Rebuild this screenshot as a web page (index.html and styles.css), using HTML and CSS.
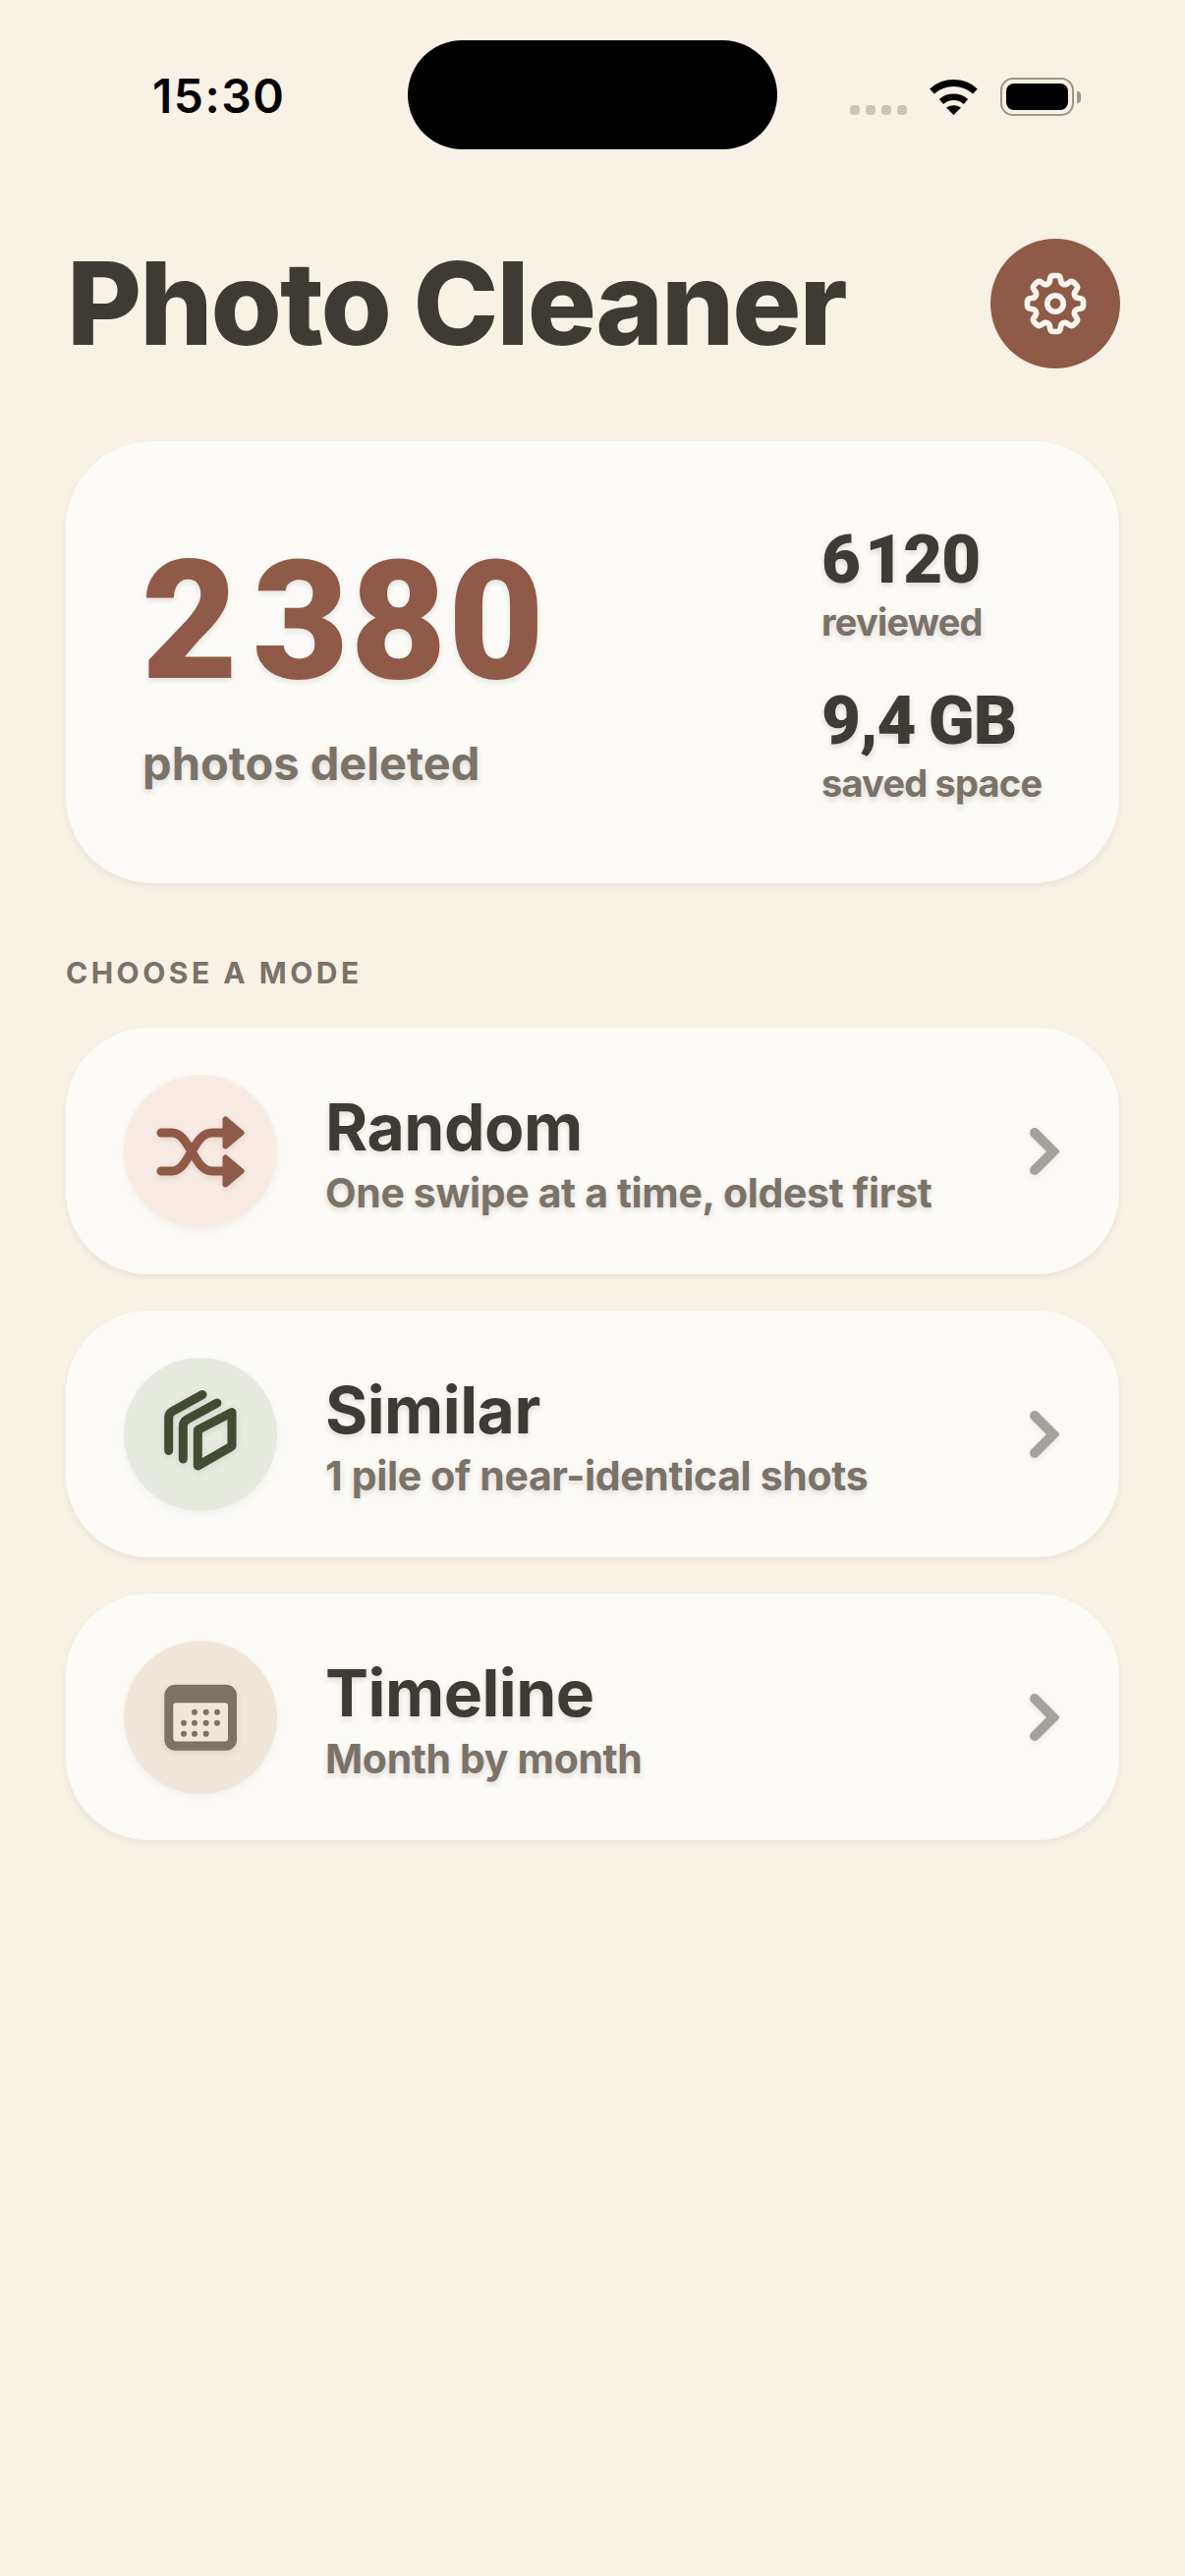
FILE: index.html
```html
<!DOCTYPE html>
<html lang="en">
<head>
  <meta charset="UTF-8">
  <meta name="viewport" content="width=device-width, initial-scale=1.0">
  <title>Photo Cleaner</title>
  <link rel="stylesheet" href="styles.css">
</head>
<body>
  <div class="status-bar">
    <span class="time">15:30</span>
    <div class="island"></div>
    <div class="status-icons">
      <div class="dots"><i></i><i></i><i></i><i></i></div>
      <svg class="wifi" viewBox="0 0 51 37">
        <path d="M3.5 13 A33 33 0 0 1 47.5 13" fill="none" stroke="#000" stroke-width="7"/>
        <path d="M13 23.5 A19 19 0 0 1 38 23.5" fill="none" stroke="#000" stroke-width="6.5"/>
        <path d="M18 29.5 Q25.5 25 33 29.5 L25.5 37 Z" fill="#000"/>
      </svg>
      <div class="battery"><div class="battery-fill"></div></div>
      <div class="battery-nub"></div>
    </div>
  </div>

  <main class="page">
    <header class="header">
      <h1 class="title">Photo Cleaner</h1>
      <button class="settings">
        <svg viewBox="0 0 24 24" width="76" height="76" fill="none" stroke="#fdf6f0" stroke-width="1.8" stroke-linejoin="round">
          <path d="M10.343 3.94c.09-.542.56-.94 1.11-.94h1.093c.55 0 1.02.398 1.11.94l.149.894c.07.424.384.764.78.93.398.164.855.142 1.205-.108l.737-.527a1.125 1.125 0 0 1 1.45.12l.773.774c.39.389.44 1.002.12 1.45l-.527.737c-.25.35-.272.806-.107 1.204.165.397.505.71.93.78l.893.15c.543.09.94.559.94 1.109v1.094c0 .55-.397 1.02-.94 1.11l-.894.149c-.424.07-.764.383-.929.78-.165.398-.143.854.107 1.204l.527.738c.32.447.269 1.06-.12 1.45l-.774.773a1.125 1.125 0 0 1-1.449.12l-.738-.527c-.35-.25-.806-.272-1.203-.107-.398.165-.71.505-.781.929l-.149.894c-.09.542-.56.94-1.11.94h-1.094c-.55 0-1.019-.398-1.11-.94l-.148-.894c-.071-.424-.384-.764-.781-.93-.398-.164-.854-.142-1.204.108l-.738.527c-.447.32-1.06.269-1.45-.12l-.773-.774a1.125 1.125 0 0 1-.12-1.45l.527-.737c.25-.35.272-.806.108-1.204-.165-.397-.506-.71-.93-.78l-.894-.15c-.542-.09-.94-.56-.94-1.109v-1.094c0-.55.398-1.02.94-1.11l.894-.149c.424-.07.765-.383.93-.78.165-.398.143-.854-.108-1.204l-.526-.738a1.125 1.125 0 0 1 .12-1.45l.773-.773a1.125 1.125 0 0 1 1.45-.12l.737.527c.35.25.807.272 1.204.107.397-.165.71-.505.78-.929l.15-.894Z"/>
          <circle cx="12" cy="12" r="2.6"/>
        </svg>
      </button>
    </header>

    <section class="stats-card">
      <div class="stats-main">
        <div class="deleted-count">2&nbsp;380</div>
        <div class="deleted-label">photos deleted</div>
      </div>
      <div class="stats-side">
        <div class="stat">
          <div class="stat-value">6&nbsp;120</div>
          <div class="stat-label">reviewed</div>
        </div>
        <div class="stat">
          <div class="stat-value stat-value-size">9,4 GB</div>
          <div class="stat-label">saved space</div>
        </div>
      </div>
    </section>

    <h2 class="section-title">CHOOSE A MODE</h2>

    <div class="modes">
      <a class="mode">
        <div class="mode-icon icon-random">
          <svg viewBox="0 0 96 96" width="96" height="96" fill="none" stroke="#8f5a47" stroke-width="9" stroke-linecap="round">
            <path d="M8 29 H19 C28 29 33 38 39 48 C45 58 50 68 60 68 H74"/>
            <path d="M8 68 H19 C28 68 33 58 39 48 C45 38 50 29 60 29 H74"/>
            <path d="M89.5 29 L73.5 15.5 V42.5 Z M89.5 68 L73.5 54.5 V81.5 Z" fill="#8f5a47" stroke-width="6" stroke-linejoin="round"/>
          </svg>
        </div>
        <div class="mode-text">
          <div class="mode-name">Random</div>
          <div class="mode-desc">One swipe at a time, oldest first</div>
        </div>
        <svg class="chevron" viewBox="0 0 30 48" width="30" height="48"><path d="M5 5 L24 24 L5 43" fill="none" stroke="#a5a29c" stroke-width="10" stroke-linecap="round" stroke-linejoin="miter"/></svg>
      </a>

      <a class="mode">
        <div class="mode-icon icon-similar">
          <svg viewBox="0 0 96 96" width="96" height="96" fill="none" stroke="#414d33" stroke-width="9" stroke-linecap="round" stroke-linejoin="round">
            <path d="M50 7.5 L19.5 24.5 Q15.7 26.5 15.7 31 V64.5"/>
            <path d="M65 16 L34 33 Q30.3 35 30.3 40 V73"/>
            <path d="M45.3 43.5 L80 25.5 V60 L45.3 80 Z"/>
          </svg>
        </div>
        <div class="mode-text">
          <div class="mode-name">Similar</div>
          <div class="mode-desc">1 pile of near-identical shots</div>
        </div>
        <svg class="chevron" viewBox="0 0 30 48" width="30" height="48"><path d="M5 5 L24 24 L5 43" fill="none" stroke="#a5a29c" stroke-width="10" stroke-linecap="round" stroke-linejoin="miter"/></svg>
      </a>

      <a class="mode">
        <div class="mode-icon icon-timeline">
          <svg viewBox="0 0 96 96" width="96" height="96">
            <rect x="11.3" y="14.7" width="73.7" height="67" rx="11" fill="#7b7268"/>
            <rect x="20.3" y="33.3" width="55.7" height="39.3" rx="3" fill="#f0e7da"/>
            <g fill="#7b7268">
              <circle cx="42" cy="42.7" r="3"/><circle cx="53.7" cy="42.7" r="3"/><circle cx="65" cy="42.7" r="3"/>
              <circle cx="31" cy="53.7" r="3"/><circle cx="42" cy="53.7" r="3"/><circle cx="53.7" cy="53.7" r="3"/><circle cx="65" cy="53.7" r="3"/>
              <circle cx="31" cy="64.7" r="3"/><circle cx="42" cy="64.7" r="3"/><circle cx="53.7" cy="64.7" r="3"/>
            </g>
          </svg>
        </div>
        <div class="mode-text">
          <div class="mode-name">Timeline</div>
          <div class="mode-desc">Month by month</div>
        </div>
        <svg class="chevron" viewBox="0 0 30 48" width="30" height="48"><path d="M5 5 L24 24 L5 43" fill="none" stroke="#a5a29c" stroke-width="10" stroke-linecap="round" stroke-linejoin="miter"/></svg>
      </a>
    </div>
  </main>
</body>
</html>
```

FILE: styles.css
```css
* {
  box-sizing: border-box;
}
body {
  margin: 0;
  height: 2622px;
  overflow: hidden;
  background-color: #f7f1e6;
  font-family: Inter, "Liberation Sans", sans-serif;
  color: #3e3b35;
}

/* status bar */
.status-bar {
  display: grid;
  grid-template-columns: 415px 376px 1fr;
  align-items: center;
  padding-top: 41px;
}
.time {
  padding-left: 155px;
  padding-top: 3px;
  font-size: 48px;
  line-height: 56px;
  font-weight: 600;
  letter-spacing: 1.5px;
  color: #000;
}
.island {
  height: 111px;
  background: #000;
  border-radius: 56px;
}
.status-icons {
  display: flex;
  align-items: flex-end;
  height: 39px;
  margin-top: 3px;
  padding-left: 74px;
}
.dots {
  display: flex;
  gap: 6px;
  margin-bottom: 1px;
}
.dots i {
  width: 10px;
  height: 10px;
  border-radius: 4px;
  background: #c9c3b8;
}
.wifi {
  width: 51px;
  height: 37px;
  margin-left: 22px;
  margin-bottom: 1px;
}
.battery {
  width: 75px;
  height: 39px;
  margin-left: 22px;
  padding: 4px;
  border: 2.5px solid #9c968b;
  border-radius: 13px;
}
.battery-fill {
  height: 100%;
  background: #000;
  border-radius: 8px;
}
.battery-nub {
  width: 4px;
  height: 12px;
  margin: 0 0 13px 3px;
  background: #9c968b;
  border-radius: 0 4px 4px 0;
}

.page {
  padding: 0 67px;
}

/* header */
.header {
  display: flex;
  justify-content: space-between;
  align-items: center;
  margin-top: 91px;
}
.title {
  margin: 0 0 0 1px;
  font-size: 117px;
  line-height: 132px;
  font-weight: 800;
  letter-spacing: -2px;
}
.settings {
  display: flex;
  align-items: center;
  justify-content: center;
  width: 132px;
  height: 132px;
  margin-right: -1px;
  padding: 0;
  border: none;
  border-radius: 50%;
  background: #8f5a47;
}

/* stats */
.stats-card {
  display: flex;
  justify-content: space-between;
  height: 450px;
  margin-top: 74px;
  padding: 85px 78px 0 75px;
  background: #fcfbf8;
  border-radius: 88px;
  box-shadow: 0 3px 6px rgba(90, 70, 50, 0.08);
}
.deleted-count {
  margin-top: 14px;
  margin-left: 2px;
  font-family: Roboto, Inter, sans-serif;
  font-size: 169px;
  line-height: 168px;
  font-weight: 900;
  letter-spacing: 1.5px;
  word-spacing: -30px;
  color: #8f5a47;
  text-shadow: 0 3px 6px rgba(0, 0, 0, 0.1);
}
.deleted-label {
  margin-top: 33px;
  margin-left: 3px;
  font-size: 47px;
  line-height: 56px;
  font-weight: 700;
  letter-spacing: 0;
  color: #7b7268;
  text-shadow: 0 3px 6px rgba(0, 0, 0, 0.14);
}
.stats-side {
  display: flex;
  flex-direction: column;
  gap: 42px;
  width: 225px;
}
.stat-value {
  font-family: Roboto, Inter, sans-serif;
  font-size: 69px;
  line-height: 72px;
  font-weight: 900;
  letter-spacing: -1px;
  word-spacing: -11px;
  text-shadow: 0 3px 6px rgba(0, 0, 0, 0.14);
}
.stat-value-size {
  word-spacing: -3px;
}
.stat-label {
  margin-top: 4px;
  font-size: 38px;
  line-height: 46px;
  font-weight: 700;
  letter-spacing: -0.8px;
  color: #7b7268;
  text-shadow: 0 3px 6px rgba(0, 0, 0, 0.14);
}

.section-title {
  margin: 73px 0 0;
  font-size: 30px;
  line-height: 36px;
  font-weight: 700;
  letter-spacing: 3.5px;
  color: #7b7268;
}

/* mode list */
.modes {
  display: flex;
  flex-direction: column;
  gap: 37px;
  margin-top: 38px;
}
.mode {
  display: flex;
  align-items: center;
  height: 251px;
  padding: 0 61px 0 59px;
  background: #fcfbf8;
  border-radius: 84px;
  box-shadow: 0 3px 6px rgba(90, 70, 50, 0.08);
}
.mode-icon {
  display: flex;
  align-items: center;
  justify-content: center;
  flex: none;
  width: 156px;
  height: 156px;
  border-radius: 50%;
  box-shadow: 0 3px 8px rgba(0, 0, 0, 0.05);
}
.mode-icon svg {
  filter: drop-shadow(0 2px 3px rgba(0, 0, 0, 0.1));
}
.icon-random {
  background: #f8ebe4;
}
.icon-similar {
  background: #e7ebdf;
}
.icon-timeline {
  background: #f0e7da;
}
.mode-text {
  flex: 1;
  margin-left: 49px;
  padding-top: 6px;
}
.mode-name {
  font-size: 66px;
  line-height: 72px;
  font-weight: 700;
  letter-spacing: -0.5px;
  text-shadow: 0 3px 6px rgba(0, 0, 0, 0.12);
}
.mode-desc {
  margin-top: 6px;
  font-size: 41px;
  line-height: 50px;
  font-weight: 700;
  letter-spacing: -0.35px;
  color: #7b7268;
  text-shadow: 0 3px 6px rgba(0, 0, 0, 0.14);
}
.chevron {
  flex: none;
  filter: drop-shadow(0 2px 3px rgba(0, 0, 0, 0.08));
}
```
